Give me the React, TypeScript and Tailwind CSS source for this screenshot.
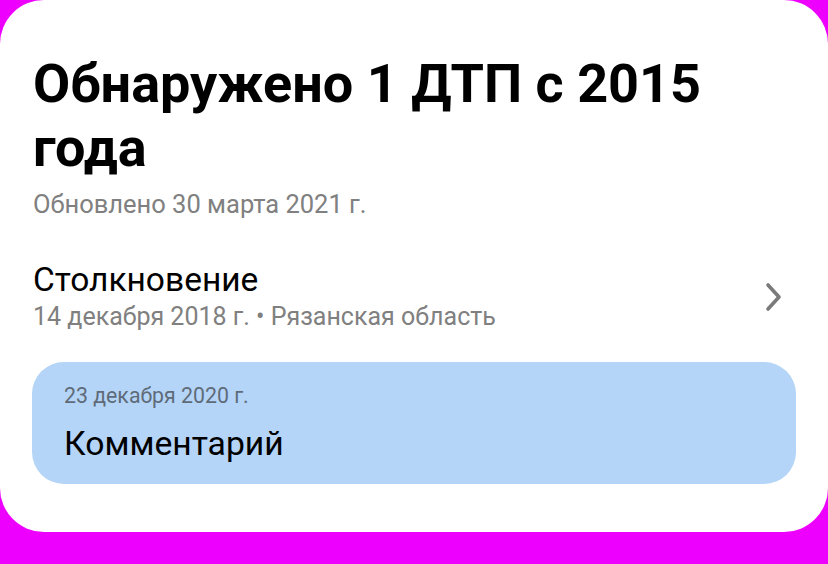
export default function App() {
  return (
    <div className="w-[828px] h-[564px] bg-[#ee00ff] overflow-hidden" style={{ fontFamily: 'Roboto, "Noto Sans", sans-serif' }}>
      <div className="bg-white h-[532px] rounded-[44px] pl-[32px] pr-[32px] pt-[52px]">
        <h1 className="text-[54px] leading-[64px] font-bold text-black pl-[1px]">Обнаружено 1 ДТП с 2015 года</h1>
        <div className="mt-[10px] text-[25.5px] leading-[28px] text-[#808080] pl-[1px]">Обновлено 30 марта 2021 г.</div>
        <div className="mt-[44px] flex items-center justify-between">
          <div className="pl-[1px]">
            <div className="text-[33.5px] leading-[36px] text-black">Столкновение</div>
            <div className="mt-[4px] text-[25px] leading-[30px] text-[#808080]">14 декабря 2018 г. • Рязанская область</div>
          </div>
          <svg width="18" height="30" viewBox="0 0 18 30" className="mr-[13px]">
            <path d="M3 3 L14 15 L3 27" fill="none" stroke="#7a7a7a" strokeWidth="3.6" strokeLinecap="round" strokeLinejoin="round" />
          </svg>
        </div>
        <div className="mt-[30px] bg-[#b4d5f8] rounded-[32px] px-[32px] pt-[21px] pb-[21px]">
          <div className="text-[21.3px] leading-[26px] text-[#5f6b78]">23 декабря 2020 г.</div>
          <div className="mt-[16px] text-[33.7px] leading-[38px] text-black">Комментарий</div>
        </div>
      </div>
    </div>
  );
}
